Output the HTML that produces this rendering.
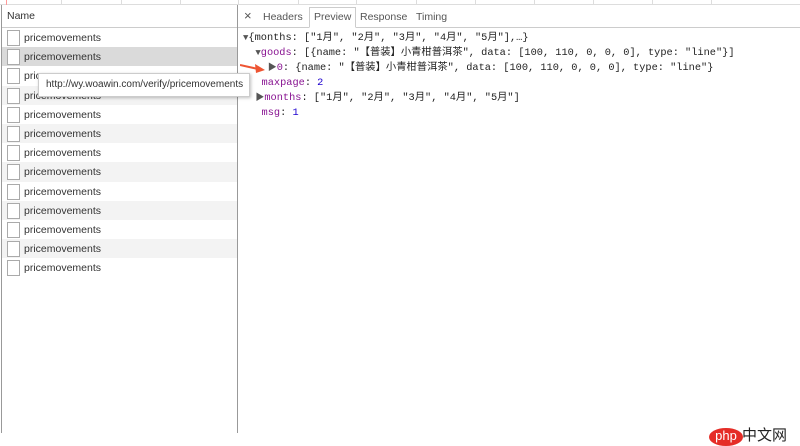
<!DOCTYPE html>
<html><head><meta charset="utf-8"><style>
*{margin:0;padding:0;box-sizing:border-box}
body{width:800px;height:433px;overflow:hidden;background:#fff;font-family:"Liberation Sans","Noto Sans CJK SC",sans-serif;position:relative}
.top{position:absolute;left:0;top:0;width:800px;height:5px;border-bottom:1px solid #ddd;background:#fff}
.top i{position:absolute;top:0;width:1px;height:5px;background:#ddd}
.left{position:absolute;left:1px;top:5px;width:237px;height:428px;border-left:1px solid #999;border-right:1px solid #999}
.hdr{height:23px;border-bottom:1px solid #ccc;font-size:10.5px;color:#333;padding:5px 0 0 5px}
.row{position:absolute;left:0;width:235px;height:19.2px;font-size:10.5px;color:#333;padding:4px 0 0 22px}
.row:before{content:"";position:absolute;left:5px;top:2px;width:11px;height:14px;border:1px solid #aaa;background:#fff}
.g{background:#f3f3f3}.sel{background:#dadada}
.tabs{position:absolute;left:238px;top:5px;width:562px;height:23px;border-bottom:1px solid #ccc;font-size:10.5px;color:#555}
.tabs span{position:absolute;top:6px}
.pv{position:absolute;left:71px;top:2px;width:47px;height:21px;border:1px solid #ccc;border-bottom:1px solid #fff;background:#fff}
.code{position:absolute;left:243px;top:31px;font-family:"Liberation Mono","Noto Sans CJK SC",monospace;font-size:10.3px;line-height:15px;color:#222;white-space:pre}
.k{color:#881391}.n{color:#1c00cf}.t{color:#555;font-size:9px}
.tip{position:absolute;left:38px;top:73px;width:212px;height:24px;background:#fff;border:1px solid #ccc;box-shadow:1px 1px 3px rgba(0,0,0,.25);font-size:10px;color:#333;padding:5px 0 0 7px}
</style></head><body>
<div class="top"><i style="left:6px;background:#f99"></i><i style="left:61px"></i><i style="left:121px"></i><i style="left:180px"></i><i style="left:238px"></i><i style="left:298px"></i><i style="left:356px"></i><i style="left:416px"></i><i style="left:475px"></i><i style="left:534px"></i><i style="left:593px"></i><i style="left:652px"></i><i style="left:711px"></i></div>
<div class="left"><div class="hdr">Name</div>
<div class="row" style="top:23px">pricemovements</div>
<div class="row sel" style="top:42.2px">pricemovements</div>
<div class="row" style="top:61.4px">pric</div>
<div class="row g" style="top:80.6px">pricemovements</div>
<div class="row" style="top:99.8px">pricemovements</div>
<div class="row g" style="top:119px">pricemovements</div>
<div class="row" style="top:138.2px">pricemovements</div>
<div class="row g" style="top:157.4px">pricemovements</div>
<div class="row" style="top:176.6px">pricemovements</div>
<div class="row g" style="top:195.8px">pricemovements</div>
<div class="row" style="top:215px">pricemovements</div>
<div class="row g" style="top:234.2px">pricemovements</div>
<div class="row" style="top:253.4px">pricemovements</div>
</div>
<div class="tabs"><div class="pv"></div><span style="left:6px;top:3px;font-size:13px">×</span><span style="left:25px">Headers</span><span style="left:76px">Preview</span><span style="left:122px">Response</span><span style="left:178px">Timing</span></div>
<div class="code"><span class="t">▼</span>{months: ["1月", "2月", "3月", "4月", "5月"],…}
  <span class="t">▼</span><span class="k">goods</span>: [{name: "【普装】小青柑普洱茶", data: [100, 110, 0, 0, 0], type: "line"}]
    <span class="t">▶</span><span class="k">0</span>: {name: "【普装】小青柑普洱茶", data: [100, 110, 0, 0, 0], type: "line"}
   <span class="k">maxpage</span>: <span class="n">2</span>
  <span class="t">▶</span><span class="k">months</span>: ["1月", "2月", "3月", "4月", "5月"]
   <span class="k">msg</span>: <span class="n">1</span></div>
<svg style="position:absolute;left:240px;top:62px" width="26" height="12"><path d="M0 3 L18 7" stroke="#e53" stroke-width="2"/><path d="M25 8 L15 2 L16 11 Z" fill="#e53"/></svg>
<div class="tip">http://wy.woawin.com/verify/pricemovements</div>
<div style="position:absolute;left:709px;top:428px;width:34px;height:18px;border-radius:50%;background:#e52d27;color:#fff;font-size:13px;text-align:center;line-height:16px">php</div>
<div style="position:absolute;left:742px;top:424px;font-size:15px;color:#222">中文网</div>
</body></html>
